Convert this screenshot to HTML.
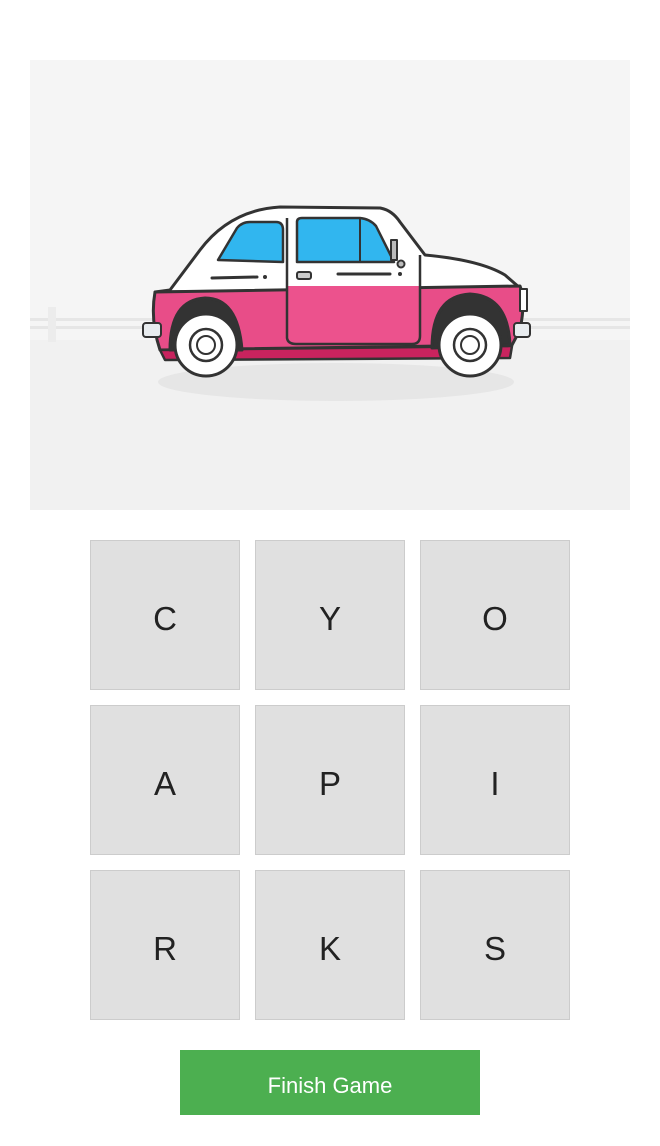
<!DOCTYPE html>
<html><head><style>
body{margin:0;background:#fff;width:660px;height:1146px;position:relative;font-family:"Segoe UI","Liberation Sans",sans-serif;}
.img{position:absolute;left:30px;top:60px;width:600px;height:450px;}
.t{position:absolute;width:148px;height:140px;padding-top:8px;background:#e0e0e0;border:1px solid #ccc;display:flex;align-items:center;justify-content:center;font-size:33px;color:#222;}
.btn{position:absolute;left:180px;top:1050px;width:300px;height:59px;padding-top:6px;background:#4caf50;color:#fff;font-size:22px;display:flex;align-items:center;justify-content:center;}
</style></head><body>
<svg class="img" viewBox="30 60 600 450" width="600" height="450">
<rect x="30" y="60" width="600" height="450" fill="#f5f5f5"/>
<rect x="30" y="340" width="600" height="170" fill="#f1f1f1"/>
<rect x="30" y="318" width="600" height="3" fill="#e6e6e6"/>
<rect x="30" y="326" width="600" height="3" fill="#e6e6e6"/>
<rect x="48" y="307" width="8" height="35" fill="#ececec"/>
<ellipse cx="336" cy="382" rx="178" ry="19" fill="#e6e6e6"/>
<g stroke="#333" stroke-width="3" stroke-linejoin="round">
<path d="M170 290 L200 250 Q230 210 280 207 L380 208 Q392 210 400 222 L425 255 Q480 260 505 275 L520 288 L155 292 Z" fill="#fff"/>
<path d="M155 292 L520 286 Q526 300 520 330 L512 345 L160 350 Q150 320 155 292 Z" fill="#e84d88"/>
<path d="M287 286 L287 338 Q288 344 296 344 L412 344 Q420 344 420 336 L420 286" fill="#ec528d" stroke-width="2.5"/>
<path d="M287 218 L287 286 M420 255 L420 286" fill="none" stroke-width="2.5"/>
<path d="M218 260 L237 228 Q242 222 250 222 L276 222 Q283 222 283 230 L283 262 Z" fill="#31b6ef" stroke-width="2.5"/>
<path d="M297 222 Q297 218 302 218 L360 218 Q370 219 376 226 L394 262 L297 262 Z" fill="#31b6ef" stroke-width="2.5"/>
<path d="M360 218 L360 262" stroke-width="2"/>
<path d="M160 350 L512 346 L510 358 L165 360 Z" fill="#c9235e" stroke-width="2.5"/>
<path d="M170 350 Q170 300 205 298 Q238 298 242 350 Z" fill="#333"/>
<path d="M432 348 Q432 296 470 294 Q508 296 510 345 Z" fill="#333"/>
<circle cx="206" cy="345" r="31" fill="#fff"/>
<circle cx="470" cy="345" r="31" fill="#fff"/>
<circle cx="206" cy="345" r="16" fill="none" stroke-width="2.5"/>
<circle cx="206" cy="345" r="9" fill="none" stroke-width="2"/>
<circle cx="470" cy="345" r="16" fill="none" stroke-width="2.5"/>
<circle cx="470" cy="345" r="9" fill="none" stroke-width="2"/>
<rect x="143" y="323" width="18" height="14" rx="3" fill="#e8ecef" stroke-width="2"/>
<rect x="514" y="323" width="16" height="14" rx="3" fill="#e8ecef" stroke-width="2"/>
<rect x="520" y="289" width="7" height="22" fill="#fff" stroke-width="2"/>
<rect x="297" y="272" width="14" height="7" rx="2" fill="#ccc" stroke-width="2"/>
<rect x="391" y="240" width="6" height="20" fill="#bbb" stroke-width="2"/>
<circle cx="401" cy="264" r="3.5" fill="#bbb" stroke-width="2"/>
</g>
<g stroke="#333" stroke-width="3" stroke-linecap="round">
<line x1="212" y1="278" x2="257" y2="277"/>
<line x1="338" y1="274" x2="390" y2="274"/>
</g>
<circle cx="265" cy="277" r="2" fill="#333"/><circle cx="400" cy="274" r="2" fill="#333"/>
</svg>
<div class="t" style="left:90px;top:540px">C</div>
<div class="t" style="left:255px;top:540px">Y</div>
<div class="t" style="left:420px;top:540px">O</div>
<div class="t" style="left:90px;top:705px">A</div>
<div class="t" style="left:255px;top:705px">P</div>
<div class="t" style="left:420px;top:705px">I</div>
<div class="t" style="left:90px;top:870px">R</div>
<div class="t" style="left:255px;top:870px">K</div>
<div class="t" style="left:420px;top:870px">S</div>
<div class="btn">Finish Game</div>
</body></html>
